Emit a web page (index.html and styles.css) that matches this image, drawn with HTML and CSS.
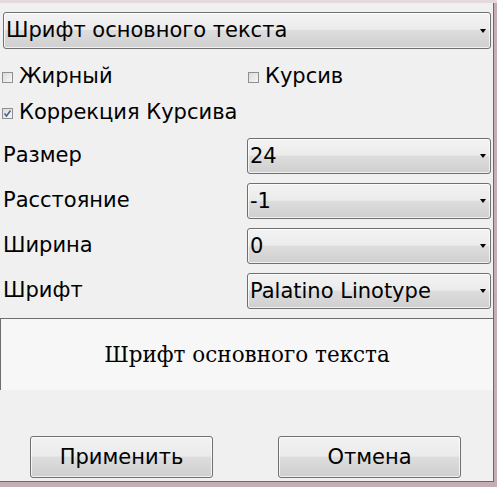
FILE: index.html
```html
<!DOCTYPE html>
<html lang="ru">
<head>
<meta charset="utf-8">
<title>Шрифт</title>
<link rel="stylesheet" href="styles.css">
</head>
<body>
<div class="topstrip"></div>
<div class="frame">
  <div class="window">
    <div class="combo combo-main">
      <span class="combo-text">Шрифт основного текста</span>
      <span class="arrow"></span>
    </div>
    <div class="checks">
      <label class="check check-bold"><span class="box"></span><span class="check-text">Жирный</span></label>
      <label class="check check-italic"><span class="box"></span><span class="check-text">Курсив</span></label>
    </div>
    <div class="checks checks-2">
      <label class="check"><span class="box box-checked"><svg viewBox="0 0 11 11" width="11" height="11"><path d="M2.5 5.5 L4.5 8 L8.5 2.5" fill="none" stroke="#4a5a8a" stroke-width="1.4"/></svg></span><span class="check-text">Коррекция Курсива</span></label>
    </div>
    <div class="params">
      <div class="param-label">Размер</div>
      <div class="combo"><span class="combo-text">24</span><span class="arrow"></span></div>
      <div class="param-label">Расстояние</div>
      <div class="combo"><span class="combo-text">-1</span><span class="arrow"></span></div>
      <div class="param-label">Ширина</div>
      <div class="combo"><span class="combo-text">0</span><span class="arrow"></span></div>
      <div class="param-label">Шрифт</div>
      <div class="combo"><span class="combo-text">Palatino Linotype</span><span class="arrow"></span></div>
    </div>
    <div class="preview">
      <span class="preview-text">Шрифт основного текста</span>
    </div>
    <div class="buttons">
      <button class="btn btn-apply">Применить</button>
      <button class="btn btn-cancel">Отмена</button>
    </div>
  </div>
</div>
</body>
</html>
```

FILE: styles.css
```css
html, body {
  margin: 0;
  padding: 0;
}
body {
  width: 497px;
  height: 487px;
  background: #c6adb3;
  overflow: hidden;
  font-family: "DejaVu Sans", Verdana, sans-serif;
  color: #000;
}
.topstrip {
  height: 3px;
  background: #e4dadd;
}
.frame {
  width: 497px;
}
.window {
  box-sizing: border-box;
  width: 494px;
  height: 479px;
  background: #f0f0f0;
  border-right: 1px solid #6a6a6a;
  border-bottom: 1px solid #6a6a6a;
  display: flex;
  flex-direction: column;
}
.combo {
  box-sizing: border-box;
  height: 36px;
  border: 1px solid #707070;
  border-radius: 3px;
  background: linear-gradient(to bottom, #f3f3f3 0%, #ebebeb 48%, #dddddd 50%, #cfcfcf 100%);
  box-shadow: inset 0 0 0 1px rgba(255,255,255,0.7);
  display: flex;
  align-items: center;
  padding: 0 4px 0 2px;
  font-size: 21px;
}
.combo-text {
  flex: 1;
  white-space: nowrap;
  line-height: 1;
}
.arrow {
  width: 0;
  height: 0;
  border-left: 3.5px solid transparent;
  border-right: 3.5px solid transparent;
  border-top: 4px solid #000;
}
.combo-main {
  height: 37px;
  margin: 9px 2px 0 3px;
}
.checks {
  display: flex;
  height: 28px;
  margin-top: 13px;
  align-items: center;
}
.checks-2 {
  margin-top: 8px;
}
.check {
  display: flex;
  align-items: center;
  font-size: 21px;
}
.check-bold {
  width: 248px;
  padding-left: 2px;
  box-sizing: border-box;
}
.checks-2 .check {
  padding-left: 2px;
}
.box {
  box-sizing: border-box;
  width: 11px;
  height: 11px;
  border: 1px solid #8e8f8f;
  background: linear-gradient(135deg, #dcdcdc, #f6f6f6);
  margin-right: 6px;
  display: inline-flex;
  align-items: center;
  justify-content: center;
  position: relative;
  top: 1px;
}
.box svg {
  display: block;
  margin: -1px;
}
.params {
  display: grid;
  grid-template-columns: 247px 244px;
  grid-auto-rows: 36px;
  row-gap: 9px;
  margin-top: 12px;
}
.param-label {
  font-size: 21px;
  display: flex;
  align-items: center;
  padding-left: 3px;
  padding-bottom: 3px;
}
.preview {
  box-sizing: border-box;
  margin-top: 9px;
  width: 493px;
  height: 72px;
  border-top: 1px solid #6e6e6e;
  border-left: 1px solid #6e6e6e;
  background: #f7f7f7;
  display: flex;
  align-items: center;
  justify-content: center;
}
.preview-text {
  font-family: "DejaVu Serif", "Liberation Serif", serif;
  font-size: 21.5px;
}
.buttons {
  display: flex;
  margin-top: 46px;
  padding-left: 30px;
  gap: 65px;
}
.btn {
  box-sizing: border-box;
  width: 183px;
  height: 42px;
  border: 1px solid #707070;
  border-radius: 3px;
  background: linear-gradient(to bottom, #f2f2f2 0%, #ebebeb 48%, #dddddd 50%, #cfcfcf 100%);
  box-shadow: inset 0 0 0 1px rgba(255,255,255,0.7);
  font-family: "DejaVu Sans", Verdana, sans-serif;
  font-size: 21px;
  color: #000;
  padding: 0;
}
```
